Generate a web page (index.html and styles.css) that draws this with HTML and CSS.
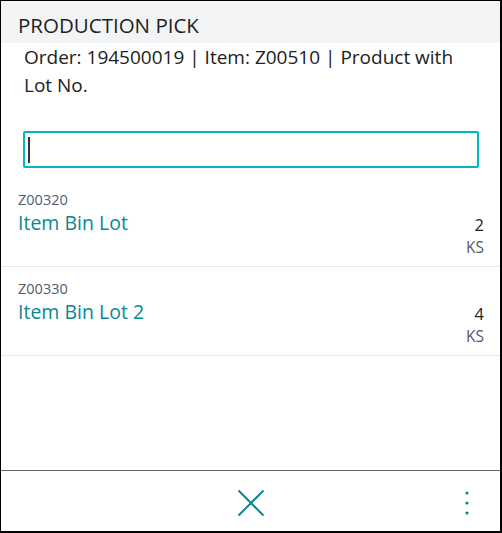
FILE: index.html
```html
<!DOCTYPE html>
<html>
<head>
<meta charset="utf-8">
<link rel="stylesheet" href="styles.css">
</head>
<body>
<div class="app">
  <div class="header">PRODUCTION PICK</div>
  <div class="subtitle">Order: 194500019 | Item: Z00510 | Product with Lot No.</div>
  <div class="search"><span class="caret"></span></div>
  <div class="list">
    <div class="item">
      <div class="item-main">
        <div class="code">Z00320</div>
        <div class="name">Item Bin Lot</div>
      </div>
      <div class="item-side">
        <div class="qty">2</div>
        <div class="unit">KS</div>
      </div>
    </div>
    <div class="item">
      <div class="item-main">
        <div class="code">Z00330</div>
        <div class="name">Item Bin Lot 2</div>
      </div>
      <div class="item-side">
        <div class="qty">4</div>
        <div class="unit">KS</div>
      </div>
    </div>
  </div>
  <div class="footer">
    <div class="footer-left"></div>
    <svg class="close" width="28" height="28" viewBox="0 0 28 28">
      <path d="M1.5 1.5 L26.5 26.5 M26.5 1.5 L1.5 26.5" stroke="#0b8793" stroke-width="2" fill="none" stroke-linecap="butt"/>
    </svg>
    <div class="footer-right">
      <svg class="more" width="4" height="24" viewBox="0 0 4 24">
        <circle cx="2" cy="2" r="1.6" fill="#0b8793"/>
        <circle cx="2" cy="12" r="1.6" fill="#0b8793"/>
        <circle cx="2" cy="22" r="1.6" fill="#0b8793"/>
      </svg>
    </div>
  </div>
</div>
</body>
</html>
```
FILE: styles.css
```css
html, body {
  margin: 0;
  padding: 0;
  background: #fff;
}
.app {
  width: 502px;
  height: 533px;
  box-sizing: border-box;
  border-style: solid;
  border-color: #000;
  border-width: 1px 2px 2px 1px;
  display: flex;
  flex-direction: column;
  font-family: "Open Sans", "Noto Sans", sans-serif;
  color: #212121;
  overflow: hidden;
}
.header {
  background: #f3f4f6;
  height: 42px;
  flex: none;
  padding: 10px 0 0 17px;
  font-size: 20.5px;
  line-height: 28px;
  box-sizing: border-box;
  color: #1f1f1f;
}
.subtitle {
  padding: 0 22px 0 23px;
  font-size: 19px;
  line-height: 28px;
  flex: none;
}
.search {
  margin: 32px 21px 0 22px;
  height: 37px;
  box-sizing: border-box;
  border: 2px solid #00b7c3;
  border-radius: 2px;
  flex: none;
  display: flex;
  align-items: center;
  padding-left: 3px;
}
.caret {
  width: 1.5px;
  height: 26px;
  background: #333;
}
.list {
  margin-top: 10px;
  flex: none;
}
.item {
  display: flex;
  justify-content: space-between;
  height: 89px;
  box-sizing: border-box;
  border-bottom: 1px solid #e6e6e6;
  padding: 13px 16px 0 17px;
}
.code {
  font-size: 14.5px;
  line-height: 18px;
  color: #505c6d;
}
.name {
  font-size: 19.5px;
  line-height: 26px;
  margin-top: 1px;
  color: #0a8793;
}
.item-side {
  text-align: right;
  padding-top: 23px;
}
.qty {
  font-size: 16.5px;
  line-height: 22px;
  color: #212121;
}
.unit {
  font-size: 15.5px;
  line-height: 22px;
  color: #505c6d;
}
.footer {
  margin-top: auto;
  height: 61px;
  flex: none;
  box-sizing: border-box;
  border-top: 1px solid #666;
  display: grid;
  grid-template-columns: 1fr auto 1fr;
  align-items: center;
}
.close {
  display: block;
  margin-top: 3px;
}
.footer-right {
  display: flex;
  justify-content: flex-end;
  padding-right: 31px;
}
.more {
  display: block;
  margin-top: 3px;
}
```
